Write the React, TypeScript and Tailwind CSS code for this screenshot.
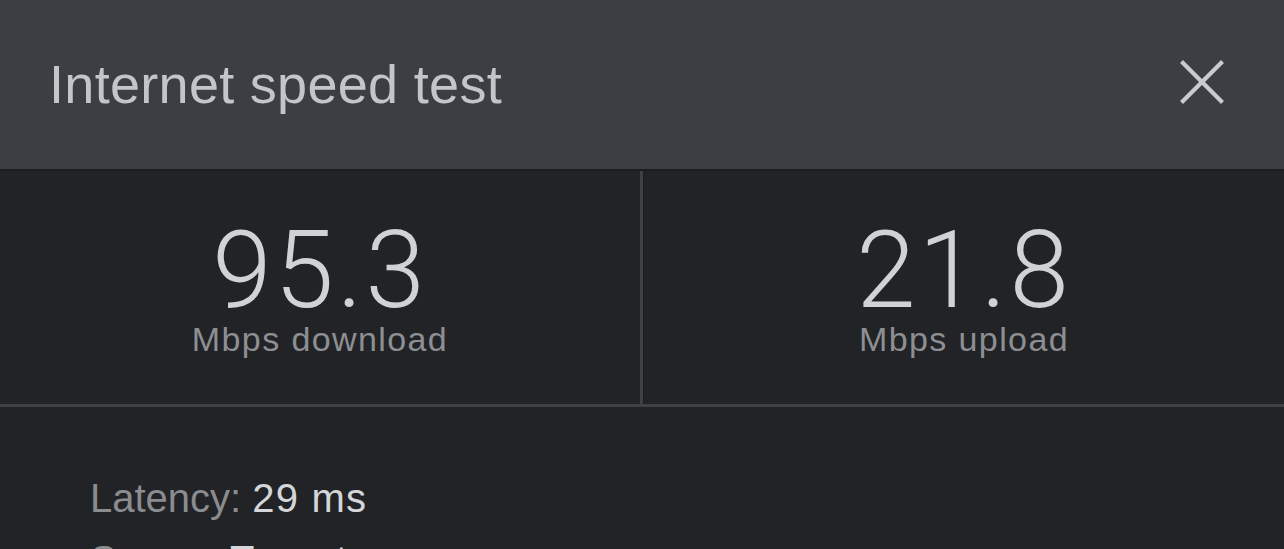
import React from 'react';

// Speed test result card
type Stat = { value: string; label: string };

const stats: Stat[] = [
  { value: '95.3', label: 'Mbps download' },
  { value: '21.8', label: 'Mbps upload' },
];

export default function App() {
  return (
    <div className="w-[1284px] h-[549px] overflow-hidden bg-[#222327] font-['Liberation_Sans',Arial,sans-serif]">
      {/* header */}
      <div className="h-[171px] bg-[#3b3e42] border-b-2 border-[#1c1d20] flex items-center justify-between pl-[49px] pr-[60px]">
        <h1 className="text-[54px] leading-none tracking-[0.3px] text-[#c3c5c8] -mt-[2px]">Internet speed test</h1>
        <button className="w-[44px] h-[44px] flex items-center justify-center -mt-[5px]" aria-label="Close">
          <svg width="44" height="44" viewBox="0 0 44 44" fill="none" stroke="#c9cbce" strokeWidth="4.2" strokeLinecap="square">
            <path d="M3 3 L41 41 M41 3 L3 41" />
          </svg>
        </button>
      </div>

      {/* stats */}
      <div className="flex border-b-[3px] border-[#3f4145]">
        {stats.map((s, i) => (
          <div
            key={s.label}
            className={
              i === 0
                ? 'flex-1 h-[233px] pt-[51px] flex flex-col items-center border-r-[3px] border-[#3f4145]'
                : 'flex-1 h-[233px] pt-[51px] flex flex-col items-center border-l border-[#1b1c1f]'
            }
          >
            <div className="font-['Roboto',sans-serif] font-light text-[107px] leading-[98px] tracking-[3px] text-[#d0d2d5]">{s.value}</div>
            <div className="mt-[2px] text-[34px] leading-none tracking-[1.4px] text-[#8d8f93]">{s.label}</div>
          </div>
        ))}
      </div>

      {/* details */}
      <div className="pt-[60px] pl-[90px] text-[40px] leading-[62px]">
        <div>
          <span className="text-[#8a8c90]">Latency: </span>
          <span className="text-[#d4d6d9] tracking-[1.2px]">29 ms</span>
        </div>
        <div>
          <span className="text-[#8a8c90]">Server: </span>
          <span className="text-[#d4d6d9] tracking-[1.2px]">Toronto</span>
        </div>
      </div>
    </div>
  );
}
